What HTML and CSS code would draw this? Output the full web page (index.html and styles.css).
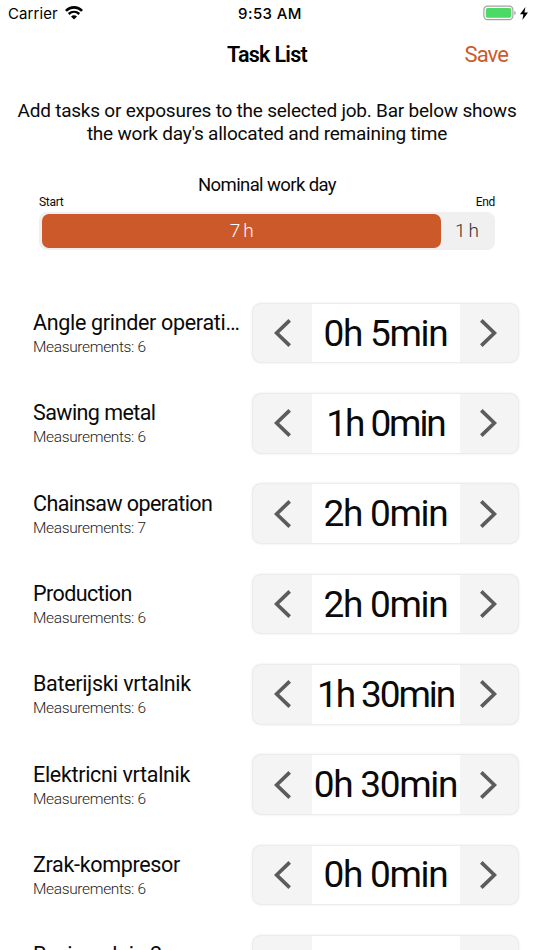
FILE: index.html
```
<!DOCTYPE html>
<html lang="en">

<head>
    <meta charset="UTF-8">
    <meta name="viewport" content="width=device-width, initial-scale=1.0">
    <title>Task List</title>
    <link rel="stylesheet" href="styles.css">
</head>

<body>
    <!-- Shared icons -->
    <svg class="icon-defs" width="0" height="0">
        <symbol id="prev" viewBox="0 0 17 28">
            <path d="M15.7 1.4L2.6 14L15.7 26.6" fill="none" stroke="#5c5c5c" stroke-width="3.7"/>
        </symbol>
        <symbol id="next" viewBox="0 0 17 28">
            <path d="M1.3 1.4L14.4 14L1.3 26.6" fill="none" stroke="#5c5c5c" stroke-width="3.7"/>
        </symbol>
    </svg>

    <div class="status-bar">
        <div class="status-left">
            <span class="carrier">Carrier</span>
            <svg class="wifi" width="18" height="14" viewBox="0 0 18 14">
                <path d="M0.9 4.9C5.4 0.2 12.6 0.2 17.1 4.9" fill="none" stroke="#000" stroke-width="2.6"/>
                <path d="M3.7 8C6.8 5.1 11.2 5.1 14.3 8" fill="none" stroke="#000" stroke-width="2.4"/>
                <path d="M6 10.4C7.8 8.8 10.2 8.8 12 10.4L9 13.5Z" fill="#000"/>
            </svg>
        </div>
        <span class="clock">9:53 AM</span>
        <div class="status-right">
            <svg width="34" height="16" viewBox="0 0 34 16">
                <rect x="0.9" y="1.1" width="29" height="13.6" rx="3.6" fill="#fff" stroke="#a3a3a3" stroke-width="1.2"/>
                <rect x="2.8" y="3" width="25.4" height="9.8" rx="1.8" fill="#4cd964"/>
                <path d="M31.3 5.8C33.3 6.6 33.3 9.4 31.3 10.2Z" fill="#a3a3a3"/>
            </svg>
            <svg class="bolt" width="8" height="13" viewBox="0 0 8 13">
                <path d="M5.4 0L0 7.3H3.4L2.4 13L8 5.5H4.4Z" fill="#000"/>
            </svg>
        </div>
    </div>

    <header class="nav-bar">
        <h1>Task List</h1>
        <a class="save">Save</a>
    </header>

    <p class="intro">Add tasks or exposures to the selected job. Bar below shows<br>the work day's allocated and remaining time</p>

    <section class="work-day">
        <h2>Nominal work day</h2>
        <div class="bar-labels">
            <span>Start</span>
            <span>End</span>
        </div>
        <div class="bar">
            <div class="bar-used">7 h</div>
            <div class="bar-left">1 h</div>
        </div>
    </section>

    <main class="tasks">
        <div class="task">
            <div class="task-info">
                <div class="task-name">Angle grinder operati…</div>
                <div class="task-count">Measurements: 6</div>
            </div>
            <div class="stepper">
                <button><svg><use href="#prev"/></svg></button>
                <span class="time">0h 5min</span>
                <button><svg><use href="#next"/></svg></button>
            </div>
        </div>
        <div class="task">
            <div class="task-info">
                <div class="task-name tight">Sawing metal</div>
                <div class="task-count">Measurements: 6</div>
            </div>
            <div class="stepper">
                <button><svg><use href="#prev"/></svg></button>
                <span class="time tight">1h 0min</span>
                <button><svg><use href="#next"/></svg></button>
            </div>
        </div>
        <div class="task">
            <div class="task-info">
                <div class="task-name tight">Chainsaw operation</div>
                <div class="task-count">Measurements: 7</div>
            </div>
            <div class="stepper">
                <button><svg><use href="#prev"/></svg></button>
                <span class="time">2h 0min</span>
                <button><svg><use href="#next"/></svg></button>
            </div>
        </div>
        <div class="task">
            <div class="task-info">
                <div class="task-name tight">Production</div>
                <div class="task-count">Measurements: 6</div>
            </div>
            <div class="stepper">
                <button><svg><use href="#prev"/></svg></button>
                <span class="time">2h 0min</span>
                <button><svg><use href="#next"/></svg></button>
            </div>
        </div>
        <div class="task">
            <div class="task-info">
                <div class="task-name">Baterijski vrtalnik</div>
                <div class="task-count">Measurements: 6</div>
            </div>
            <div class="stepper">
                <button><svg><use href="#prev"/></svg></button>
                <span class="time tight">1h 30min</span>
                <button><svg><use href="#next"/></svg></button>
            </div>
        </div>
        <div class="task">
            <div class="task-info">
                <div class="task-name">Elektricni vrtalnik</div>
                <div class="task-count">Measurements: 6</div>
            </div>
            <div class="stepper">
                <button><svg><use href="#prev"/></svg></button>
                <span class="time">0h 30min</span>
                <button><svg><use href="#next"/></svg></button>
            </div>
        </div>
        <div class="task">
            <div class="task-info">
                <div class="task-name">Zrak-kompresor</div>
                <div class="task-count">Measurements: 6</div>
            </div>
            <div class="stepper">
                <button><svg><use href="#prev"/></svg></button>
                <span class="time">0h 0min</span>
                <button><svg><use href="#next"/></svg></button>
            </div>
        </div>
        <div class="task">
            <div class="task-info">
                <div class="task-name">Rezisaralnia 2</div>
            </div>
            <div class="stepper">
                <button><svg><use href="#prev"/></svg></button>
                <span class="time"></span>
                <button><svg><use href="#next"/></svg></button>
            </div>
        </div>
    </main>
</body>

</html>
```
FILE: styles.css
```
* {
    box-sizing: border-box;
}

body {
    font-family: Roboto, sans-serif;
    margin: 0;
    height: 950px;
    overflow: hidden;
    background: #fff;
    color: #0a0a0a;
    display: flex;
    flex-direction: column;
}

h1,
h2,
p {
    margin: 0;
    font-weight: 400;
}

.icon-defs {
    display: none;
}

/* Status bar */
.status-bar {
    flex: none;
    height: 27px;
    padding: 0 6px 0 8px;
    display: grid;
    grid-template-columns: 1fr auto 1fr;
    align-items: center;
    font-family: Inter, sans-serif;
    font-size: 15px;
    color: #000;
}

.status-left,
.status-right {
    display: flex;
    align-items: center;
}

.carrier {
    letter-spacing: 0.1px;
}

.wifi {
    margin-left: 7px;
    margin-top: -2px;
}

.clock {
    padding-left: 4px;
    font-weight: 500;
    letter-spacing: 0.4px;
}

.status-right {
    justify-content: flex-end;
    gap: 3px;
    margin-top: -1px;
}

/* Header */
.nav-bar {
    flex: none;
    height: 55px;
    padding: 0 26px;
    display: grid;
    grid-template-columns: 1fr auto 1fr;
    align-items: center;
}

.nav-bar h1 {
    grid-column: 2;
    font-size: 21.5px;
    font-weight: 600;
    letter-spacing: -0.7px;
    color: #000;
}

.save {
    justify-self: end;
    font-size: 22px;
    letter-spacing: -0.9px;
    color: #cc5a2b;
}

.intro {
    flex: none;
    height: 92px;
    padding-top: 18px;
    text-align: center;
    white-space: nowrap;
    font-size: 19px;
    line-height: 22.5px;
    letter-spacing: -0.22px;
}

/* Work day bar */
.work-day {
    flex: none;
    height: 114px;
    margin: 0 39px;
}

.work-day h2 {
    height: 21px;
    line-height: 22px;
    font-size: 18.5px;
    letter-spacing: -0.6px;
    text-align: center;
}

.bar-labels {
    display: flex;
    justify-content: space-between;
    height: 16.5px;
    line-height: 14px;
    font-size: 12px;
    letter-spacing: -0.3px;
}

.bar {
    display: flex;
    height: 38.5px;
    padding: 2.5px;
    border-radius: 8px;
    background: #f0f0f0;
}

.bar-used,
.bar-left {
    display: flex;
    align-items: center;
    justify-content: center;
    font-size: 19px;
    font-weight: 300;
    letter-spacing: -0.8px;
}

.bar-used {
    width: 399.5px;
    border-radius: 7px;
    background: #cb592a;
    color: #fff;
}

.bar-left {
    width: 51px;
    color: #333;
}

/* Task rows */
.task {
    display: flex;
    align-items: center;
    justify-content: space-between;
    height: 90.3px;
    padding: 0 16px 0 33px;
}

.task-info {
    width: 212px;
    height: 49px;
    white-space: nowrap;
    margin-top: 3px;
}

.task-name {
    font-size: 21.5px;
    line-height: 26px;
    letter-spacing: -0.32px;
}

.task-name.tight {
    letter-spacing: -0.57px;
}

.task-count {
    font-size: 15.5px;
    line-height: 23px;
    font-weight: 300;
    letter-spacing: -0.35px;
    color: #222;
}

.stepper {
    display: grid;
    grid-template-columns: 58.5px 148px 58.5px;
    height: 58.5px;
    border-radius: 8px;
    background: #f4f4f4;
    box-shadow: 0 0 3px rgba(0, 0, 0, 0.22);
}

.stepper button {
    display: flex;
    align-items: center;
    justify-content: center;
    padding: 0;
    border: none;
    background: none;
}

.stepper svg {
    width: 17px;
    height: 28px;
}

.time {
    display: flex;
    align-items: center;
    justify-content: center;
    background: #fff;
    white-space: nowrap;
    font-size: 37px;
    letter-spacing: -1.3px;
}

.time.tight {
    letter-spacing: -2.1px;
}
```
